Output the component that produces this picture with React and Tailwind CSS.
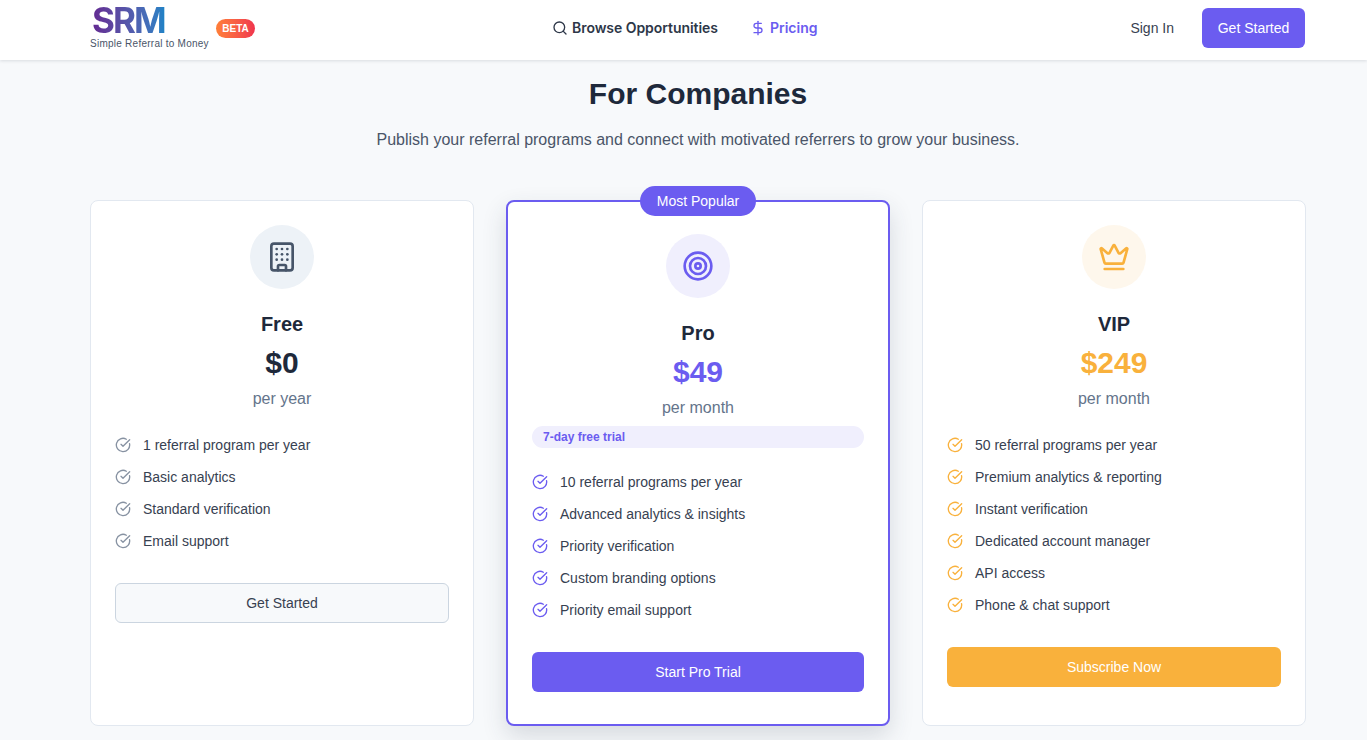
import { Building, CircleCheckBig, Crown, DollarSign, Search, Target } from "lucide-react";

const plans = [
  {
    name: "Free",
    price: "$0",
    period: "per year",
    Icon: Building,
    iconWrap: "bg-[#edf2f7] text-[#475569]",
    priceColor: "text-[#1e293b]",
    checkColor: "text-[#8792a2]",
    features: [
      "1 referral program per year",
      "Basic analytics",
      "Standard verification",
      "Email support",
    ],
    cta: "Get Started",
    ctaClass: "bg-[#f7f9fb] border border-[#cbd5e0] text-[#374151]",
  },
  {
    name: "Pro",
    price: "$49",
    period: "per month",
    popular: true,
    trial: "7-day free trial",
    Icon: Target,
    iconWrap: "bg-[#f0effd] text-[#6b5cf0]",
    priceColor: "text-[#6b5cf0]",
    checkColor: "text-[#6b5cf0]",
    features: [
      "10 referral programs per year",
      "Advanced analytics & insights",
      "Priority verification",
      "Custom branding options",
      "Priority email support",
    ],
    cta: "Start Pro Trial",
    ctaClass: "bg-[#6b5cf0] text-white",
  },
  {
    name: "VIP",
    price: "$249",
    period: "per month",
    Icon: Crown,
    iconWrap: "bg-[#fef7ec] text-[#f9b13c]",
    priceColor: "text-[#f9b13c]",
    checkColor: "text-[#f9b13c]",
    features: [
      "50 referral programs per year",
      "Premium analytics & reporting",
      "Instant verification",
      "Dedicated account manager",
      "API access",
      "Phone & chat support",
    ],
    cta: "Subscribe Now",
    ctaClass: "bg-[#f9b13c] text-white",
  },
];

function Header() {
  return (
    <header className="bg-white h-[60px] shadow-[0_1px_3px_rgba(45,55,72,0.15)] relative z-10">
      <div className="w-[1216px] ml-[90px] h-full pb-[4px] flex items-center">
        <div className="flex items-center w-[462px]">
          <div className="flex flex-col items-start w-[126px]">
            <span className="font-['Inter',sans-serif] font-bold text-[35px] leading-[27px] tracking-[-2px] pl-[2px] bg-gradient-to-r from-[#632590] to-[#1c82c6] bg-clip-text text-transparent">
              SRM
            </span>
            <span className="text-[10px] leading-[12px] mt-[4px] text-[#4a5568] tracking-[0.25px] whitespace-nowrap">
              Simple Referral to Money
            </span>
          </div>
          <span className="h-[19px] w-[39px] flex items-center justify-center rounded-full bg-gradient-to-r from-[#ff7f38] to-[#f0344d] text-white text-[10px] font-bold">
            BETA
          </span>
        </div>
        <nav className="flex items-center gap-[32px] text-sm">
          <a className="flex items-center gap-[4px] font-semibold text-[#2d3748] font-['Inter',sans-serif] tracking-[-0.05px]">
            <Search size={16} strokeWidth={2} />
            Browse Opportunities
          </a>
          <a className="flex items-center gap-[4px] font-semibold text-[#6b5cf0] font-['Inter',sans-serif]">
            <DollarSign size={16} strokeWidth={2} />
            Pricing
          </a>
        </nav>
        <div className="ml-auto mr-[1px] flex items-center gap-[28px] text-sm">
          <a className="text-[#374151]">Sign In</a>
          <button className="h-10 w-[103px] rounded-md bg-[#6b5cf0] text-white">Get Started</button>
        </div>
      </div>
    </header>
  );
}

function PlanCard({ plan }) {
  const { Icon } = plan;
  return (
    <div
      className={`relative bg-white rounded-lg flex flex-col ${
        plan.popular
          ? "border-2 border-[#6b5cf0] px-6 py-8 shadow-[0_10px_25px_rgba(45,55,72,0.16)]"
          : "border border-[#e2e8f0] p-6"
      }`}
    >
      {plan.popular && (
        <div className="absolute -top-[16px] left-1/2 -translate-x-1/2 h-[30px] w-[116px] flex items-center justify-center rounded-full bg-[#6b5cf0] text-white text-sm whitespace-nowrap">
          Most Popular
        </div>
      )}
      <div className="flex flex-col items-center">
        <div className={`w-16 h-16 rounded-full flex items-center justify-center ${plan.iconWrap}`}>
          <Icon size={32} strokeWidth={2} />
        </div>
        <h3 className="mt-[21px] text-xl leading-7 font-semibold text-[#1e293b]">{plan.name}</h3>
        <div className={`mt-[6px] text-[30px] leading-[38px] font-bold ${plan.priceColor}`}>{plan.price}</div>
        <div className="mt-[5px] text-base leading-6 text-[#64748b]">{plan.period}</div>
      </div>
      {plan.trial && (
        <div className="mt-[6px] h-[22px] flex items-center px-[11px] rounded-full bg-[#f0effd] text-[#6b5cf0] text-xs font-semibold">
          {plan.trial}
        </div>
      )}
      <ul className="mt-[18px] mb-[26px]">
        {plan.features.map((f) => (
          <li key={f} className="h-8 flex items-center gap-[12px] text-sm text-[#374151]">
            <CircleCheckBig size={16} strokeWidth={2} className={`shrink-0 ${plan.checkColor}`} />
            {f}
          </li>
        ))}
      </ul>
      <button className={`h-10 rounded-md text-sm ${plan.ctaClass}`}>{plan.cta}</button>
    </div>
  );
}

export default function App() {
  return (
    <div className="min-h-screen bg-[#f7f9fb] font-['Liberation_Sans',Arial,sans-serif]">
      <Header />
      <main className="w-[1216px] ml-[90px]">
        <h1 className="mt-[14px] text-center text-[30px] leading-[40px] font-bold text-[#1e293b]">For Companies</h1>
        <p className="mt-[14px] text-center text-base leading-6 text-[#4a5568]">
          Publish your referral programs and connect with motivated referrers to grow your business.
        </p>
        <div className="mt-[48px] grid grid-cols-3 gap-8 pb-8">
          {plans.map((p) => (
            <PlanCard key={p.name} plan={p} />
          ))}
        </div>
      </main>
    </div>
  );
}
